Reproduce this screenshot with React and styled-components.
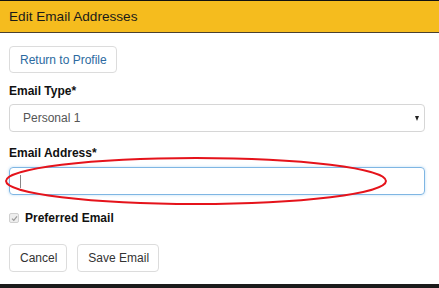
import styled, { createGlobalStyle } from "styled-components";

const GlobalStyle = createGlobalStyle`
  html, body {
    margin: 0;
    padding: 0;
    background: #fff;
  }
  body {
    font-family: "Liberation Sans", Arial, sans-serif;
    color: #333;
  }
`;

const Page = styled.div`
  position: relative;
  width: 439px;
  height: 288px;
  box-sizing: border-box;
  border-top: 1px solid #111;
  border-bottom: 4px solid #1b1b1b;
  overflow: hidden;
`;

const Header = styled.div`
  height: 31px;
  background-color: #f5bc1e;
  border-bottom: 1px solid #4a4030;
  display: flex;
  align-items: center;
  padding-left: 9px;
  font-size: 13.6px;
  color: #1a1a1a;
`;

const Body = styled.div`
  padding: 13px 14px 0 9px;
  display: flex;
  flex-direction: column;
  align-items: flex-start;
`;

const Button = styled.button`
  height: ${props => props.tall ? "28px" : "27px"};
  padding: 0 9px 0 10px;
  background: #fff;
  border: 1px solid #dcdcdc;
  border-radius: 4px;
  font-family: "Liberation Sans", Arial, sans-serif;
  font-size: 12px;
  color: ${props => props.link ? "#2c6aa0" : "#333"};
  cursor: pointer;
`;

const Label = styled.div`
  margin-top: ${props => props.gap || "11px"};
  font-size: 12px;
  font-weight: bold;
  line-height: 14px;
  color: #111;
`;

const Field = styled.div`
  position: relative;
  margin-top: ${props => props.gap || "6px"};
  width: 416px;
  height: 28px;
  box-sizing: border-box;
  border: 1px solid ${props => props.focused ? "#7fb6e3" : "#d6d6d6"};
  border-radius: 4px;
  box-shadow: ${props => props.focused ? "0 0 3px rgba(102,175,233,0.45)" : "none"};
  display: flex;
  align-items: center;
  padding-left: 13px;
  font-size: 12px;
  color: #555;
`;

const Arrow = styled.span`
  margin-left: auto;
  margin-right: 5px;
  width: 0;
  height: 0;
  border-left: 2.5px solid transparent;
  border-right: 2.5px solid transparent;
  border-top: 5px solid #222;
`;

const Caret = styled.span`
  width: 1px;
  height: 13px;
  margin-left: -3px;
  background: #888;
`;

const CheckRow = styled.div`
  margin-top: 16px;
  display: flex;
  align-items: center;
  gap: 6px;
  height: 14px;
`;

const Check = styled.span`
  width: 8px;
  height: 8px;
  border: 1px solid #d0d0d0;
  border-radius: 2px;
  background: #eee;
  display: flex;
  align-items: center;
  justify-content: center;
`;

const CheckText = styled.span`
  font-size: 12px;
  font-weight: bold;
  color: #111;
`;

const Actions = styled.div`
  margin-top: 19px;
  display: flex;
  gap: 10px;
`;

const Ellipse = styled.svg`
  position: absolute;
  left: 4px;
  top: 155px;
  pointer-events: none;
`;

const App = () => {
  return (
    <Page>
      <GlobalStyle />
      <Header>Edit Email Addresses</Header>
      <Body>
        <Button link>Return to Profile</Button>
        <Label>Email Type*</Label>
        <Field>
          Personal 1
          <Arrow />
        </Field>
        <Label gap="14px">Email Address*</Label>
        <Field focused gap="7px">
          <Caret />
        </Field>
        <CheckRow>
          <Check>
            <svg width="7" height="7" viewBox="0 0 7 7">
              <path d="M1 3.6 L2.8 5.4 L6 1.4" fill="none" stroke="#999" strokeWidth="1.2" />
            </svg>
          </Check>
          <CheckText>Preferred Email</CheckText>
        </CheckRow>
        <Actions>
          <Button tall>Cancel</Button>
          <Button tall>Save Email</Button>
        </Actions>
      </Body>
      <Ellipse width="384" height="50" viewBox="0 0 384 50">
        <ellipse cx="192" cy="25" rx="190" ry="23" fill="none" stroke="#e5131b" strokeWidth="2" />
      </Ellipse>
    </Page>
  );
};

export default App;
